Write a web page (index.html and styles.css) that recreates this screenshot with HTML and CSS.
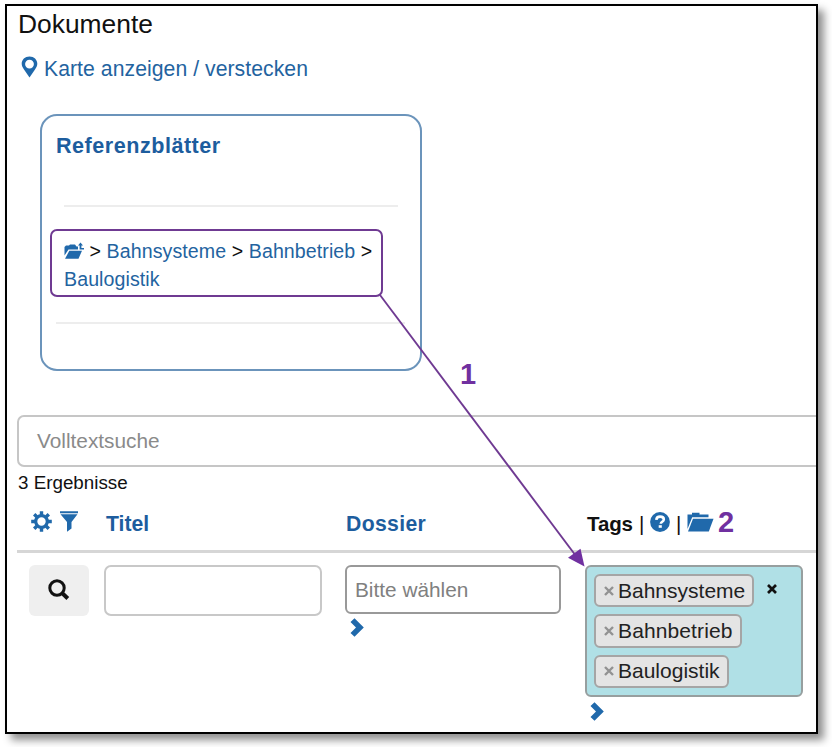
FILE: index.html
```html
<!DOCTYPE html>
<html lang="de">
<head>
<meta charset="utf-8">
<title>Dokumente</title>
<link rel="stylesheet" href="styles.css">
</head>
<body>
<main class="frame">
  <h1 class="title">Dokumente</h1>
  <a class="map-link">
    <svg class="pin" width="17" height="22" viewBox="0 0 17 22"><path fill-rule="evenodd" d="M8.500.5C4 .5.700 3.700.700 7.800c0 2.200 1 3.800 2.300 5.800L8.500 21.500l5.500-7.900c1.300-2 2.300-3.600 2.300-5.800C16.300 3.700 13 .5 8.500.5zM8.500 3.700a4.400 4.400 0 1 1 0 8.800a4.400 4.400 0 0 1 0-8.800z"/></svg>
    <span>Karte anzeigen / verstecken</span>
  </a>

  <section class="card">
    <h2 class="card-title">Referenzblätter</h2>
    <hr class="rule rule-top">
    <nav class="crumbs">
      <svg class="crumb-icon" width="20" height="18" viewBox="0 0 20 18"><path d="M.5 13.500V5L2 3.500h3L6 2.500h5L12.500 4.500H14V7.500H4.500z"/><path d="M5.300 8.800H18L14.500 16.800H1z"/><path d="M16.500.5L19 3.500H17.400V6H20V7.500H15.600V3.500H14z"/></svg>
      &gt; <a>Bahnsysteme</a> &gt; <a>Bahnbetrieb</a> &gt; <a>Baulogistik</a>
    </nav>
    <hr class="rule rule-bottom">
  </section>

  <div class="search">Volltextsuche</div>
  <p class="count">3 Ergebnisse</p>

  <div class="row head">
    <div class="tools">
      <svg width="21" height="21" viewBox="0 0 21 21"><circle cx="10.500" cy="10.500" r="5.800" fill="none" stroke="#2069ab" stroke-width="3.200"/><g stroke="#2069ab" stroke-width="3.400"><path d="M10.500.2v4M10.500 16.800v4M.2 10.500h4M16.800 10.500h4M3.200 3.200l2.800 2.800M15 15l2.800 2.800M3.200 17.800l2.800-2.800M15 6l2.800-2.800"/></g></svg>
      <svg width="18" height="21" viewBox="0 0 18 21"><path d="M0 .3h18v2H0zM.5 3.200h17L11.500 11v6.500L7 20.700V11z"/></svg>
    </div>
    <div class="th th-title">Titel</div>
    <div class="th">Dossier</div>
    <div class="th tags-head">
      <span class="tags-label">Tags</span><span class="bar">|</span>
      <svg class="help" width="20" height="20" viewBox="0 0 20 20"><circle cx="10" cy="10" r="9.900"/><path d="M6.300 7.800C6.500 5.500 8 4.600 10.100 4.600c2.200 0 3.700 1 3.700 2.800 0 2.400-3 2.400-3 4.400" fill="none" stroke="#fff" stroke-width="2.600"/><path d="M8.700 13.200h3.100v2.600H8.700z" fill="#fff"/></svg>
      <span class="bar">|</span>
      <svg class="folder" width="27" height="20" viewBox="0 0 27 20"><path d="M.5 17V2.500h4.500V.8h7.500V2.500H21.500V5.300H5.200z"/><path d="M6 6.700h20.500L21.800 19.500H1z"/></svg>
      <span class="mark">2</span>
    </div>
  </div>

  <div class="row filters">
    <button class="find" aria-label="Suchen"><svg width="22" height="22" viewBox="0 0 22 22"><circle cx="9" cy="9" r="7.200" fill="none" stroke="#111" stroke-width="3"/><path d="M13.800 13.800l6 5.700" stroke="#111" stroke-width="4"/></svg></button>
    <div class="field"></div>
    <div>
      <div class="select">Bitte wählen</div>
      <svg class="more" width="14" height="19" viewBox="0 0 14 19"><path d="M4.500.2L13.800 9.500 4.500 18.800.5 15 6 9.500.5 4z"/></svg>
    </div>
    <div>
      <div class="tagbox">
        <div class="chips">
          <span class="chip"><svg width="10" height="10" viewBox="0 0 10 10"><path d="M1 1l8 8M9 1L1 9"/></svg>Bahnsysteme</span>
          <span class="chip chip-wide"><svg width="10" height="10" viewBox="0 0 10 10"><path d="M1 1l8 8M9 1L1 9"/></svg>Bahnbetrieb</span>
          <span class="chip"><svg width="10" height="10" viewBox="0 0 10 10"><path d="M1 1l8 8M9 1L1 9"/></svg>Baulogistik</span>
        </div>
        <svg class="clear" width="10" height="10" viewBox="0 0 10 10"><path d="M1 1l8 8M9 1L1 9"/></svg>
      </div>
      <svg class="more" width="14" height="19" viewBox="0 0 14 19"><path d="M4.500.2L13.800 9.500 4.500 18.800.5 15 6 9.500.5 4z"/></svg>
    </div>
  </div>
</main>

<svg class="arrow" width="832" height="747" viewBox="0 0 832 747"><path d="M380 295L576 556" stroke="#6f3a92" stroke-width="1.900"/><path d="M584.500 566.500L568 557.800 580.500 548.800z" fill="#7030a0"/></svg>
<span class="mark mark-one">1</span>
</body>
</html>
```
FILE: styles.css
```css
* { box-sizing: border-box; }
body {
  margin: 0;
  width: 832px;
  height: 747px;
  padding: 4px 0 0 5px;
  overflow: hidden;
  position: relative;
  background: #fff;
  color: #111;
  font-family: "Liberation Sans", Arial, sans-serif;
}
svg { display: block; flex: none; fill: #2069ab; }
a { color: #23639f; }
.frame {
  width: 813px;
  height: 730px;
  border: 2px solid #000;
  background: #fff;
  overflow: hidden;
  box-shadow: 6px 6px 8px rgba(0, 0, 0, .44);
}
.title {
  margin: 0 0 12px 11px;
  font-size: 26.400px;
  font-weight: 400;
  line-height: 36px;
}
.map-link {
  display: flex;
  align-items: center;
  height: 29px;
  margin-left: 14px;
  gap: 6px;
  font-size: 21.200px;
  letter-spacing: .05px;
}
.pin { margin-top: -3px; }
.card {
  width: 382px;
  height: 257px;
  margin: 31px 0 0 33px;
  border: 2px solid #6b94bb;
  border-radius: 17px;
}
.card-title {
  margin: 15px 0 0 14px;
  color: #1d5d9e;
  font-size: 21.600px;
  letter-spacing: .5px;
  line-height: 30px;
}
.rule { height: 2px; border: 0; background: #ededed; }
.rule-top { width: 334px; margin: 44px 0 0 22px; }
.rule-bottom { width: 349px; margin: 25px 0 0 14px; }
.crumbs {
  width: 333px;
  height: 68px;
  margin: 22px 0 0 8px;
  padding: 6px 0 0 12px;
  border: 2px solid #6f3a92;
  border-radius: 7px;
  font-size: 19.600px;
  letter-spacing: .08px;
  line-height: 28px;
}
.crumb-icon { display: inline-block; vertical-align: -2px; }
.search {
  width: 820px;
  height: 52px;
  margin: 44px 0 0 10px;
  padding-left: 18px;
  border: 2px solid #c6c6c6;
  border-radius: 7px;
  color: #8a8a8a;
  font-size: 20.800px;
  line-height: 48px;
}
.count {
  margin: 3px 0 0 11px;
  font-size: 18.800px;
  line-height: 26px;
}
.row {
  display: grid;
  grid-template-columns: 75px 241px 240px 240px;
  margin-left: 10px;
  padding-left: 12px;
}
.head {
  height: 57px;
  border-bottom: 3px solid #d6d6d6;
}
.tools { display: flex; gap: 8px; padding: 15px 0 0 2px; }
.th {
  padding-left: 1px;
  color: #1d5d9e;
  font-size: 21.200px;
  font-weight: 700;
  letter-spacing: .35px;
  line-height: 55px;
}
.th-title { padding-left: 2px; letter-spacing: 0; }
.tags-head { display: flex; padding-left: 2px; color: #111; font-size: 20.500px; letter-spacing: -.1px; }
.tags-label { width: 52px; }
.bar { width: 11px; font-weight: 400; }
.help { margin: 16px 6px 0 0; }
.folder { margin: 16px 4px 0 0; }
.mark { color: #7030a0; font-size: 29px; font-weight: 700; line-height: 52px; letter-spacing: 0; }
.filters { padding-top: 12px; }
.find {
  display: flex;
  justify-content: center;
  align-items: center;
  width: 60px;
  height: 51px;
  padding: 0 0 2px;
  border: 0;
  border-radius: 6px;
  background: #efefef;
}
.field { width: 218px; height: 51px; border: 2px solid #c8c8c8; border-radius: 7px; }
.select {
  width: 216px;
  height: 49px;
  margin: 0 0 4px;
  padding-left: 8px;
  border: 2px solid #999;
  border-radius: 6px;
  color: #808080;
  font-size: 20.800px;
  line-height: 45px;
}
.more { margin-left: 5px; }
.tagbox {
  display: flex;
  width: 218px;
  height: 132px;
  margin-bottom: 5px;
  padding: 7px;
  border: 2px solid #979f9f;
  border-radius: 6px;
  background: #b0e0e6;
}
.chips { display: flex; flex-direction: column; align-items: flex-start; gap: 7px; }
.chip {
  display: flex;
  align-items: center;
  gap: 4px;
  height: 33.500px;
  padding: 0 7px 0 8px;
  border: 2px solid #a5a5a5;
  border-radius: 6px;
  background: #e4e4e4;
  color: #222;
  font-size: 21px;
}
.chip-wide { letter-spacing: .12px; }
.chip svg { fill: none; stroke: #929292; stroke-width: 2.400; }
.clear { margin: 10px 0 0 13px; fill: none; stroke: #111; stroke-width: 2.700; }
.arrow { position: absolute; left: 0; top: 0; fill: none; }
.mark-one { position: absolute; left: 460px; top: 348px; }
```
